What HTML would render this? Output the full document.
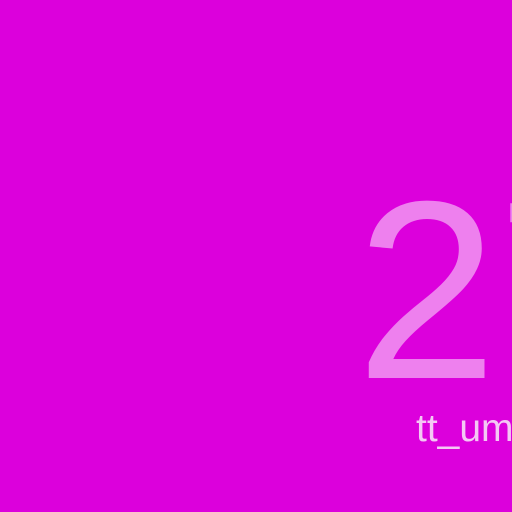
<!DOCTYPE html>
<html><head><style>
html,body{margin:0;padding:0;}
body{width:512px;height:512px;background:#dc00dc;overflow:hidden;position:relative;font-family:"Liberation Sans",sans-serif;}
.wrap{position:absolute;left:0;top:0;width:512px;height:512px;overflow:hidden;}
.big{position:absolute;left:356px;top:163px;font-size:254px;line-height:254px;color:#ee80ee;white-space:nowrap;}
.small{position:absolute;left:416px;top:409px;font-size:39px;line-height:39px;color:#f4c8f4;white-space:nowrap;}
</style></head><body>
<div class="wrap">
<div class="big">27</div>
<div class="small">tt_um</div>
</div>
</body></html>
